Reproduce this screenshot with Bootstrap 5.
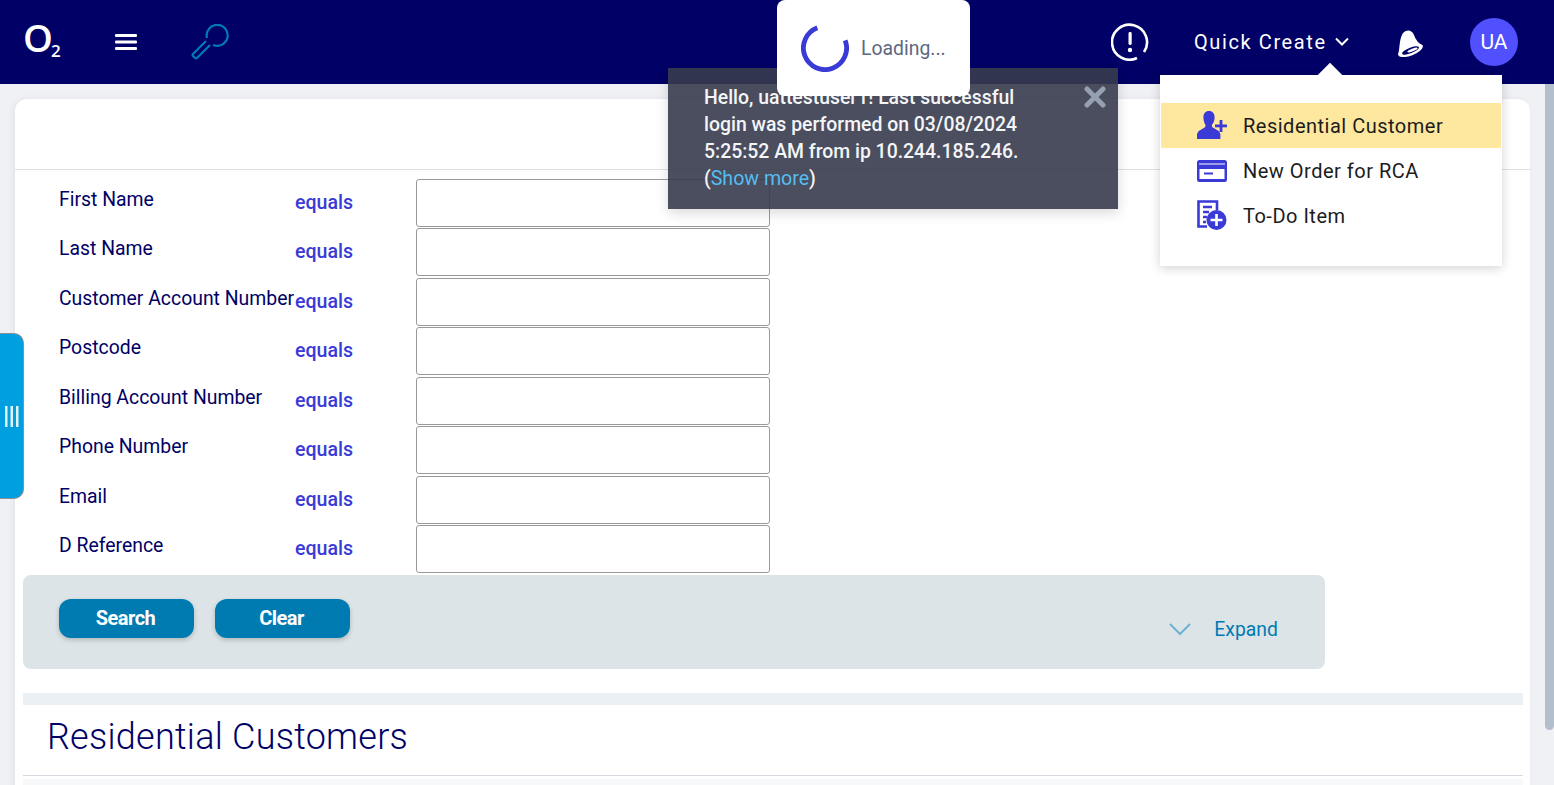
<!DOCTYPE html>
<html lang="en">

<head>
    <meta charset="UTF-8">
    <meta name="viewport" content="width=device-width, initial-scale=1.0">
    <title>Residential Customers</title>
    <link href="https://cdn.jsdelivr.net/npm/bootstrap@5.3.0/dist/css/bootstrap.min.css" rel="stylesheet">

<style>
        html, body {
            height: 785px;
            overflow: hidden;
        }

        body {
            background-color: #f0f1f5;
            font-family: Roboto, "Liberation Sans", sans-serif;
            font-size: 19.4px;
            color: #000066;
            position: relative;
        }

        /* Top Bar */
        .top-bar {
            height: 84px;
            background-color: #000066;
            padding: 0 36px 0 24px;
            flex-wrap: nowrap;
        }

        .o2-logo {
            width: 91px;
            color: #fff;
            font-family: "Open Sans", sans-serif;
            font-weight: 600;
            font-size: 38px;
            line-height: 1;
            margin-top: -11px;
            text-indent: -1px;
        }

        .o2-logo sub {
            font-size: 17px;
            bottom: -5px;
            margin-left: -2px;
            position: relative;
        }

        .menu-icon { width: 76px; }
        .menu-icon svg { display: block; }

        .quick-create {
            color: #fff;
            font-size: 20px;
            letter-spacing: 1.6px;
            width: 203px;
            margin-left: 45px;
            padding-bottom: 1px;
        }

        .quick-create svg { margin-left: 8px; }

        .bell-icon { width: 73px; }

        .user-circle {
            width: 48px;
            height: 48px;
            padding-top: 1px;
            background-color: #5050ff;
            color: #fff;
            font-size: 21px;
        }

        /* Main Card */
        .main-panel {
            margin: 15px 24px 0 15px;
            border: 0;
            border-radius: 12px;
            height: 800px;
            box-shadow: -2px 0 6px rgba(0, 0, 0, .06);
        }

        .panel-top {
            height: 71px;
            border-bottom: 1px solid #dcdfe6;
        }

        .search-rows {
            padding: 8.9px 0 0 44px;
        }

        .search-row {
            height: 49.5px;
            display: flex;
        }

        .field-name {
            width: 236px;
            white-space: nowrap;
            line-height: 42.6px;
        }

        .field-op {
            width: 121px;
            color: #3a3ad6;
            font-size: 19.6px;
            font-weight: 500;
            line-height: 47.6px;
        }

        .field-box {
            width: 354px;
            height: 48px;
            border: 1px solid #999;
            border-radius: 3px;
        }

        .action-panel {
            width: 1302px;
            height: 94px;
            margin-left: 8px;
            padding: 24px 47px 0 36px;
            background-color: #dce4e7;
            border-radius: 8px;
        }

        .action-group { gap: 21px; }

        .action-btn {
            width: 135px;
            height: 39px;
            padding: 0 2px 1px 0;
            background-color: #007bb2;
            border: 0;
            border-radius: 12px;
            color: #fff;
            font-size: 20px;
            font-weight: 700;
            letter-spacing: -.5px;
            box-shadow: 0 2px 5px rgba(0, 0, 0, .2);
        }

        .expand-link {
            margin-top: 19px;
            color: #007bb2;
            line-height: 24px;
        }

        .expand-link svg { margin-right: 23px; }

        .divider-bar {
            width: 1500px;
            height: 12px;
            margin: 24px 0 0 8px;
            background-color: #ebf0f4;
        }

        .list-title {
            width: 1500px;
            height: 71px;
            margin: 0 0 3px 8px;
            padding-left: 24px;
            border-bottom: 1px solid #d8d8e0;
            font-size: 36px;
            font-weight: 300;
            letter-spacing: .25px;
            line-height: 65px;
            color: #000066;
        }

        .list-start {
            width: 1500px;
            height: 30px;
            margin-left: 8px;
            background-color: #f7f8f9;
        }

        /* Overlays */
        .side-tab {
            position: absolute;
            left: 0;
            top: 333px;
            width: 24px;
            height: 166px;
            background-color: #00a0e0;
            border: 1px solid #8a8f94;
            border-left: 0;
            border-radius: 0 10px 10px 0;
        }

        .scroll-thumb {
            position: absolute;
            top: 84px;
            right: 0;
            width: 9px;
            height: 646px;
            background-color: #b4bfce;
            border-radius: 0 0 5px 5px;
        }

        .login-note {
            position: absolute;
            left: 668px;
            top: 68px;
            width: 450px;
            height: 141px;
            padding: 16px 0 0 36px;
            background-color: rgba(54, 59, 76, .9);
            color: #f4f5f7;
            font-weight: 500;
            line-height: 27px;
            box-shadow: 0 4px 12px rgba(0, 0, 0, .15);
        }

        .login-note p {
            width: 330px;
            margin: 0;
        }

        .login-note a {
            color: #56bdf0;
            font-size: 19.6px;
            font-weight: 400;
            text-decoration: none;
        }

        .note-close {
            position: absolute;
            top: 18px;
            right: 12px;
        }

        .loading-box {
            position: absolute;
            left: 777px;
            top: 0;
            width: 193px;
            height: 96px;
            padding: 0 0 0 24px;
            background-color: #fff;
            border-radius: 8px;
            color: #5d6880;
        }

        .loading-text {
            margin: 1px 0 0 12px;
        }

        .quick-menu {
            display: block;
            position: absolute;
            left: 1160px;
            top: 75px;
            width: 342px;
            height: 191px;
            padding: 28px 1px 0;
            border: 0;
            border-radius: 0;
            box-shadow: 0 2px 10px rgba(0, 0, 0, .18);
        }

        .quick-menu::before {
            content: "";
            position: absolute;
            left: 158px;
            top: -12px;
            width: 24px;
            height: 24px;
            background-color: #fff;
            transform: rotate(45deg) scale(.72);
        }

        .quick-item {
            height: 45px;
            padding: 0 0 0 36px;
            gap: 15px;
            color: #1c1c1c;
            font-size: 20px;
            letter-spacing: .5px;
        }

        .quick-item.active-item,
        .quick-item.active-item:hover {
            background-color: #fee79e;
            color: #1c1c1c;
        }
</style>
</head>

<body>

    <!-- Top Bar -->
    <nav class="navbar top-bar d-flex align-items-center">
        <div class="o2-logo">O<sub>2</sub></div>
        <div class="menu-icon">
            <svg width="22" height="16" viewBox="0 0 22 16" fill="#fff"><rect width="22" height="3" rx="1"/><rect y="6.5" width="22" height="3" rx="1"/><rect y="13" width="22" height="3" rx="1"/></svg>
        </div>
        <svg width="38" height="37" viewBox="0 0 38 37" fill="none" stroke="#007bb2" stroke-width="2.2"><path d="M16 14A10.500 10.500 0 1 1 22 21"/><path d="M15 17L2 30a1.500 1.500 0 0 0 0 2l2 2a1.500 1.500 0 0 0 2 0L19 21"/></svg>

        <div class="ms-auto d-flex align-items-center">
            <svg width="38" height="38" viewBox="0 0 38 38" fill="none"><path d="M26 35A17.500 17.500 0 1 1 33 29" stroke="#fff" stroke-width="2.600"/><rect x="17.500" y="9" width="3.200" height="13" rx="1.400" fill="#fff"/><circle cx="19" cy="27" r="2.200" fill="#fff"/></svg>
            <div class="quick-create d-flex align-items-center">Quick Create
                <svg width="14" height="9" viewBox="0 0 14 9" fill="none" stroke="#fff" stroke-width="2"><path d="M1 1.500l6 6 6-6"/></svg>
            </div>
            <div class="bell-icon">
                <svg width="27" height="28" viewBox="0 0 27 28"><path d="M6 4C10 0 15 1 17 6c2 5 4 8 9 10.500L1 26C3 19 2 10 6 4z" fill="#fff"/><ellipse cx="13.500" cy="21.500" rx="13" ry="5" transform="rotate(-21 13.500 21.500)" fill="#fff"/><ellipse cx="13.500" cy="21.500" rx="9" ry="2.800" transform="rotate(-21 13.500 21.500)" fill="#000066"/><ellipse cx="15.500" cy="21" rx="5.500" ry="1.300" transform="rotate(-21 15.500 21)" fill="#fff"/></svg>
            </div>
            <div class="user-circle rounded-circle d-flex align-items-center justify-content-center">UA</div>
        </div>
    </nav>

    <!-- Main Card -->
    <div class="card main-panel">
        <div class="panel-top"></div>

        <div class="search-rows">
            <div class="search-row"><div class="field-name">First Name</div><div class="field-op">equals</div><input type="text" class="field-box"></div>
            <div class="search-row"><div class="field-name">Last Name</div><div class="field-op">equals</div><input type="text" class="field-box"></div>
            <div class="search-row"><div class="field-name">Customer Account Number</div><div class="field-op">equals</div><input type="text" class="field-box"></div>
            <div class="search-row"><div class="field-name">Postcode</div><div class="field-op">equals</div><input type="text" class="field-box"></div>
            <div class="search-row"><div class="field-name">Billing Account Number</div><div class="field-op">equals</div><input type="text" class="field-box"></div>
            <div class="search-row"><div class="field-name">Phone Number</div><div class="field-op">equals</div><input type="text" class="field-box"></div>
            <div class="search-row"><div class="field-name">Email</div><div class="field-op">equals</div><input type="text" class="field-box"></div>
            <div class="search-row"><div class="field-name">D Reference</div><div class="field-op">equals</div><input type="text" class="field-box"></div>
        </div>

        <div class="action-panel d-flex justify-content-between align-items-start">
            <div class="d-flex action-group">
                <button class="btn action-btn">Search</button>
                <button class="btn action-btn">Clear</button>
            </div>
            <div class="expand-link d-flex align-items-center">
                <svg width="22" height="13" viewBox="0 0 22 13" fill="none" stroke="#6eb2d0" stroke-width="2"><path d="M1 1l10 10L21 1"/></svg>
                Expand
            </div>
        </div>

        <div class="divider-bar"></div>
        <h1 class="list-title">Residential Customers</h1>
        <div class="list-start"></div>
    </div>

    <!-- Side Tab -->
    <div class="side-tab d-flex align-items-center justify-content-center">
        <svg width="14" height="21" viewBox="0 0 14 21" fill="#dff3fb"><rect x="0" width="2.500" height="21"/><rect x="5.500" width="2.500" height="21"/><rect x="11" width="2.500" height="21"/></svg>
    </div>

    <div class="scroll-thumb"></div>

    <!-- Login Message -->
    <div class="login-note">
        <p>Hello, uattestuser1! Last successful login was performed on 03/08/2024 5:25:52 AM from ip 10.244.185.246. (<a href="#">Show more</a>)</p>
        <svg class="note-close" width="22" height="22" viewBox="0 0 22 22" stroke="#96a0b2" stroke-width="5" stroke-linecap="round"><path d="M3 3l16 16M19 3L3 19"/></svg>
    </div>

    <!-- Loading Box -->
    <div class="loading-box d-flex align-items-center">
        <svg width="48" height="48" viewBox="0 0 50 50" fill="none" stroke="#3a3ad6" stroke-width="5"><path d="M17 4A22.500 22.500 0 1 0 46 17"/></svg>
        <span class="loading-text">Loading...</span>
    </div>

    <!-- Quick Create Menu -->
    <div class="dropdown-menu quick-menu">
        <a class="dropdown-item quick-item active-item d-flex align-items-center" href="#">
            <svg width="31" height="29" viewBox="0 0 31 29" fill="#3a3ad6"><path d="M12 0c3.600 0 5.600 2.700 5.600 6.300 0 3-1 5.700-2.400 7.300-.6 1-.4 2.200.6 2.800l4.200 2.500c2 1 3.200 2.700 3.400 4.600V28H0v-4.500c.2-1.900 1.400-3.600 3.400-4.600l4.200-2.500c1-.6 1.200-1.800.6-2.800C7.400 12 6.400 9.300 6.400 6.300 6.400 2.700 8.400 0 12 0z"/><rect x="18" y="13.500" width="12" height="2.800"/><rect x="22.600" y="9" width="2.800" height="12"/></svg>
            Residential Customer
        </a>
        <a class="dropdown-item quick-item d-flex align-items-center" href="#">
            <svg width="31" height="22" viewBox="0 0 31 22"><rect x="0" y="0" width="30" height="22" rx="2.500" fill="#3a3ad6"/><rect x="2" y="3.500" width="26" height="1" fill="#fff"/><rect x="2.500" y="9" width="25" height="10" fill="#fff"/><rect x="7" y="12.500" width="9" height="2" fill="#3a3ad6"/></svg>
            New Order for RCA
        </a>
        <a class="dropdown-item quick-item d-flex align-items-center" href="#">
            <svg width="31" height="31" viewBox="0 0 31 31" fill="none"><path d="M20 10V1.500H1.500v25H10" stroke="#3a3ad6" stroke-width="2.600"/><path d="M6 7h9M6 12h6M6 17h4M6 22h3" stroke="#3a3ad6" stroke-width="2.600"/><circle cx="19.500" cy="20" r="10" fill="#3a3ad6"/><path d="M13.500 20h12M19.500 14v12" stroke="#fff" stroke-width="2.600"/></svg>
            To-Do Item
        </a>
    </div>

    <script src="https://cdn.jsdelivr.net/npm/bootstrap@5.3.0/dist/js/bootstrap.bundle.min.js"></script>

</body>

</html>
